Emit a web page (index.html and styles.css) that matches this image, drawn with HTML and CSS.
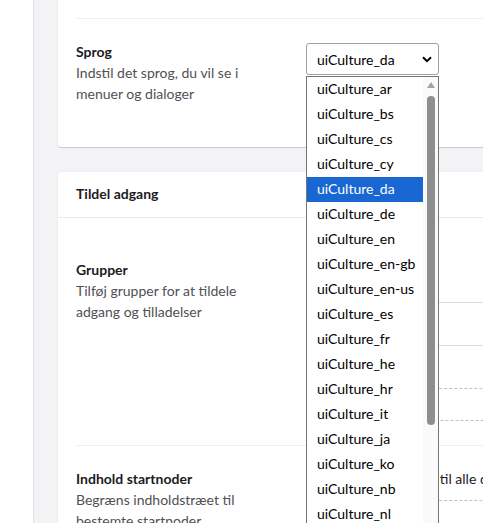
FILE: index.html
```html
<!DOCTYPE html>
<html lang="da">
<head>
<meta charset="utf-8">
<title>Bruger</title>
<link rel="stylesheet" href="styles.css">
</head>
<body>
<div class="app">
  <aside class="side"></aside>
  <main class="main">
    <section class="card card-first">
      <div class="prop prop-lang">
        <div class="label">
          <div class="name">Sprog</div>
          <div class="desc">Indstil det sprog, du vil se i menuer og dialoger</div>
        </div>
        <div class="editor">
          <div class="select">
            <span>uiCulture_da</span>
            <svg class="chev" width="10" height="7" viewBox="0 0 10 7" aria-hidden="true"><path d="M1 1.2 L5 5.2 L9 1.2" fill="none" stroke="#000" stroke-width="2"/></svg>
          </div>
        </div>
      </div>
    </section>

    <section class="card card-access">
      <header class="card-head">Tildel adgang</header>
      <div class="card-body">
        <div class="prop prop-groups">
          <div class="label">
            <div class="name">Grupper</div>
            <div class="desc">Tilføj grupper for at tildele adgang og tilladelser</div>
          </div>
          <div class="editor editor-groups">
            <div class="item"></div>
            <div class="item"></div>
            <div class="add"></div>
          </div>
        </div>
        <div class="prop prop-start">
          <div class="label">
            <div class="name">Indhold startnoder</div>
            <div class="desc">Begræns indholdstræet til bestemte startnoder</div>
          </div>
          <div class="editor">
            <div class="hint">Brugeren har adgang til alle dokumenter</div>
            <div class="add add-start"></div>
          </div>
        </div>
      </div>
    </section>
  </main>

  <div class="listbox" role="listbox">
    <div class="options">
      <div class="opt">uiCulture_ar</div>
      <div class="opt">uiCulture_bs</div>
      <div class="opt">uiCulture_cs</div>
      <div class="opt">uiCulture_cy</div>
      <div class="opt sel">uiCulture_da</div>
      <div class="opt">uiCulture_de</div>
      <div class="opt">uiCulture_en</div>
      <div class="opt">uiCulture_en-gb</div>
      <div class="opt">uiCulture_en-us</div>
      <div class="opt">uiCulture_es</div>
      <div class="opt">uiCulture_fr</div>
      <div class="opt">uiCulture_he</div>
      <div class="opt">uiCulture_hr</div>
      <div class="opt">uiCulture_it</div>
      <div class="opt">uiCulture_ja</div>
      <div class="opt">uiCulture_ko</div>
      <div class="opt">uiCulture_nb</div>
      <div class="opt">uiCulture_nl</div>
    </div>
    <div class="scroll">
      <div class="arrow"></div>
      <div class="thumb"></div>
    </div>
  </div>
</div>
</body>
</html>
```

FILE: styles.css
```css
* { box-sizing: border-box; }

html, body {
  margin: 0;
  padding: 0;
  background: #fff;
}

body {
  font-family: Lato, "Noto Sans", sans-serif;
  font-size: 14px;
  line-height: 21px;
  color: #1b1b1e;
}

.app {
  position: relative;
  display: flex;
  width: 483px;
  height: 523px;
  overflow: hidden;
}

.side {
  flex: 0 0 34px;
  background: #fff;
  border-right: 1px solid #e4e4e7;
}

.main {
  flex: 0 0 auto;
  width: 820px;
  background: #f3f3f5;
  padding: 0 24px 40px 24px;
}

.card {
  background: #fff;
  border-radius: 3px;
  box-shadow: 0 1px 1px rgba(0, 0, 0, 0.16), 0 0 2px rgba(0, 0, 0, 0.05);
}

.card-first {
  border-top-left-radius: 0;
  border-top-right-radius: 0;
  padding: 18px 18px 0 18px;
}

.card-access {
  margin-top: 25px;
}

.card-head {
  height: 46px;
  padding: 11px 18px 0 18px;
  border-bottom: 1px solid #e9e9eb;
  font-weight: 700;
}

.card-body {
  padding: 0 18px;
}

.prop {
  display: grid;
  grid-template-columns: 230px 1fr;
  align-items: start;
}

.prop-lang {
  border-top: 1px solid #eeeef0;
  padding: 22px 0 43px 0;
}

.prop-groups {
  padding: 41px 0 24px 0;
}

.prop-start {
  border-top: 1px solid #eeeef0;
  padding: 22px 0 40px 0;
}

.label {
  max-width: 170px;
}

.name {
  font-weight: 700;
  color: #1b1b1e;
}

.desc {
  color: #515054;
}

.select {
  margin-top: 2px;
  width: 133px;
  height: 32px;
  border: 1px solid #a0a0a4;
  border-radius: 3px;
  padding: 0 6px 0 10px;
  display: flex;
  align-items: center;
  justify-content: space-between;
  color: #000;
}

.chev {
  display: block;
}

.editor-groups {
  padding-top: 1px;
}

.item {
  height: 43px;
  border-bottom: 1px solid #dcdcdf;
}

.add {
  height: 33px;
  border: 1px dashed #bfbfc4;
  border-radius: 3px;
}

.editor-groups .add {
  margin-top: 42px;
}

.add-start {
  margin-top: 11px;
}

.hint {
  white-space: nowrap;
  padding-left: 3px;
  color: #1b1b1e;
}

/* open native-style option list */
.listbox {
  position: absolute;
  left: 306px;
  top: 76px;
  width: 133px;
  height: 470px;
  border: 1px solid #767676;
  background: #fff;
  display: flex;
}

.options {
  flex: 1 1 auto;
  min-width: 0;
  overflow: hidden;
}

.opt {
  height: 25px;
  line-height: 23px;
  padding-left: 10px;
  white-space: nowrap;
  color: #000;
}

.opt.sel {
  background: #1967d2;
  color: #fff;
}

.scroll {
  flex: 0 0 15px;
  background: #fafafa;
  display: flex;
  flex-direction: column;
  align-items: center;
  padding-top: 5px;
}

.arrow {
  width: 0;
  height: 0;
  border-left: 4px solid transparent;
  border-right: 4px solid transparent;
  border-bottom: 6px solid #a3a3a3;
}

.thumb {
  margin-top: 8px;
  width: 8px;
  height: 329px;
  border-radius: 4px;
  background: #8e8e8e;
}
```
